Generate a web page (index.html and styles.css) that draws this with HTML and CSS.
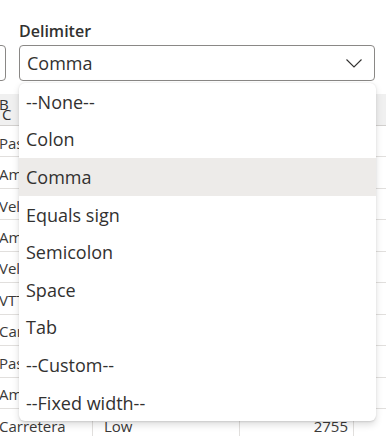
FILE: index.html
```html
<!DOCTYPE html>
<html>
<head>
<meta charset="utf-8">
<link rel="stylesheet" href="styles.css">
</head>
<body>
<div class="page">
  <div class="fields">
    <div class="field field-left">
      <div class="label">File origin</div>
      <div class="box"></div>
    </div>
    <div class="field field-main">
      <div class="label">Delimiter</div>
      <div class="box select">
        <span class="value">Comma</span>
        <svg class="chev" width="16" height="9" viewBox="0 0 16 9"><path d="M0.5 0.5 L8 8 L15.5 0.5" fill="none" stroke="#323130" stroke-width="1.1"/></svg>
      </div>
    </div>
  </div>

  <div class="table">
    <div class="row head">
      <div class="cell c1"><span class="abc"><span class="a">A</span><span class="b">B</span><span class="c">C</span></span></div>
      <div class="cell c2"></div><div class="cell c3"></div><div class="cell c4"></div>
    </div>
    <div class="row"><div class="cell c1">Paseo</div><div class="cell c2">Low</div><div class="cell c3 num">1618</div><div class="cell c4"></div></div>
    <div class="row"><div class="cell c1">Amarilla</div><div class="cell c2">Low</div><div class="cell c3 num">1321</div><div class="cell c4"></div></div>
    <div class="row"><div class="cell c1">Velo</div><div class="cell c2">Low</div><div class="cell c3 num">888</div><div class="cell c4"></div></div>
    <div class="row"><div class="cell c1">Amarilla</div><div class="cell c2">Low</div><div class="cell c3 num">2178</div><div class="cell c4"></div></div>
    <div class="row"><div class="cell c1">Velo</div><div class="cell c2">Low</div><div class="cell c3 num">2470</div><div class="cell c4"></div></div>
    <div class="row"><div class="cell c1">VTT</div><div class="cell c2">Low</div><div class="cell c3 num">1513</div><div class="cell c4"></div></div>
    <div class="row"><div class="cell c1">Carretera</div><div class="cell c2">Low</div><div class="cell c3 num">921</div><div class="cell c4"></div></div>
    <div class="row"><div class="cell c1">Paseo</div><div class="cell c2">Low</div><div class="cell c3 num">2518</div><div class="cell c4"></div></div>
    <div class="row"><div class="cell c1">Amarilla</div><div class="cell c2">Low</div><div class="cell c3 num">1899</div><div class="cell c4"></div></div>
    <div class="row"><div class="cell c1">Carretera</div><div class="cell c2">Low</div><div class="cell c3 num">2755</div><div class="cell c4"></div></div>
  </div>

  <ul class="menu">
    <li class="item">--None--</li>
    <li class="item">Colon</li>
    <li class="item selected">Comma</li>
    <li class="item">Equals sign</li>
    <li class="item">Semicolon</li>
    <li class="item">Space</li>
    <li class="item">Tab</li>
    <li class="item">--Custom--</li>
    <li class="item">--Fixed width--</li>
  </ul>
</div>
</body>
</html>
```
FILE: styles.css
```css
* { box-sizing: border-box; }
html, body { margin: 0; padding: 0; background: #fff; }
body {
  font-family: "Open Sans", "Noto Sans", sans-serif;
  color: #323130;
  overflow: hidden;
  width: 386px;
  height: 436px;
}
.page { position: relative; width: 386px; height: 436px; overflow: hidden; }

.fields {
  display: flex;
  gap: 13px;
  margin-left: -100px;
  padding-top: 20px;
}
.field { display: flex; flex-direction: column; gap: 2px; }
.field-left { width: 106px; }
.field-main { width: 356px; }
.label {
  font-size: 16px;
  font-weight: 600;
  line-height: 23px;
  padding-left: 0;
  white-space: nowrap;
}
.field-left .label { visibility: hidden; }
.box {
  height: 36px;
  border: 1px solid #8a8886;
  border-radius: 4px;
  background: #fff;
}
.select {
  display: flex;
  align-items: center;
  justify-content: space-between;
  padding: 0 12px 0 7px;
}
.value { font-size: 18px; line-height: 24px; }
.chev { display: block; margin-top: 1px; }

.table {
  margin-top: 13px;
  margin-left: -20px;
  width: 420px;
}
.row {
  display: grid;
  grid-template-columns: 113px 147px 114px 46px;
  height: 31.44px;
  border-bottom: 1px solid #e1dfdd;
  font-size: 15px;
  color: #3b3a39;
}
.row.head { height: 32px; background: #f0f0f0; border-bottom: 1px solid #d2d0ce; }
.cell {
  border-right: 1px solid #e1dfdd;
  display: flex;
  align-items: center;
  padding-top: 3px;
  white-space: nowrap;
  overflow: hidden;
}
.c1 { padding-left: 19px; }
.c2 { padding-left: 11px; }
.num { justify-content: flex-end; padding-right: 5px; }
.head .cell { border-right: none; padding-top: 0; }
.abc { position: relative; display: inline-block; width: 30px; height: 30px; margin-left: -13px; font-size: 15px; color: #323130; }
.abc span { position: absolute; line-height: 15px; }
.abc .a { left: 0; top: 0; }
.abc .b { left: 13px; top: 2px; }
.abc .c { left: 16px; top: 12px; }

.menu {
  position: absolute;
  left: 19px;
  top: 83px;
  width: 357px;
  margin: 0;
  padding: 0;
  list-style: none;
  background: #fff;
  border-radius: 6px;
  box-shadow: 0 3.2px 7.2px rgba(0,0,0,0.13), 0 0.6px 1.8px rgba(0,0,0,0.11);
  overflow: hidden;
}
.item {
  height: 37.6px;
  display: flex;
  align-items: center;
  padding-left: 7px;
  font-size: 18px;
  color: #323130;
}
.item.selected { background: #edebe9; }
```
